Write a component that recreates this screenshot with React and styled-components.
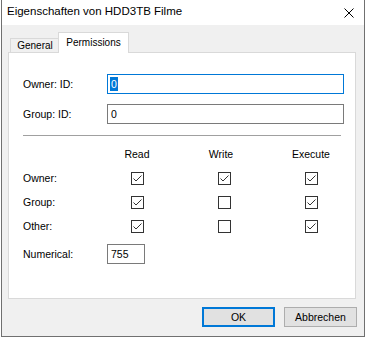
import { Fragment } from "react"
import styled, { createGlobalStyle } from "styled-components"

const GlobalStyle = createGlobalStyle`
  html, body {
    margin: 0;
    padding: 0;
    background: #ffffff;
  }
  body {
    font-family: "Liberation Sans", Arial, sans-serif;
    color: #000;
  }
`

const Window = styled.div`
  box-sizing: border-box;
  width: 364px;
  height: 337px;
  margin-left: 1px;
  border: 1px solid #707070;
  border-top: none;
  background: #f0f0f0;
  display: flex;
  flex-direction: column;
`

const TitleBar = styled.div`
  height: 25px;
  flex: none;
  background: #ffffff;
  display: flex;
  align-items: center;
  justify-content: space-between;
  padding: 0 10px 0 5px;
`

const Title = styled.span`
  font-size: 11.5px;
  line-height: 1;
  padding-bottom: 1px;
`

const CloseButton = styled.div`
  width: 10px;
  height: 10px;
  display: flex;
`

const Body = styled.div`
  display: flex;
  flex-direction: column;
  padding: 7px 7px 0 6px;
`

const TabStrip = styled.div`
  display: flex;
  align-items: flex-end;
  height: 21px;
  margin-bottom: -1px;
  padding-left: 2px;
  position: relative;
  z-index: 1;
`

const Tab = styled.div`
  box-sizing: border-box;
  height: ${(p) => (p.$active ? "21px" : "15px")};
  padding: ${(p) => (p.$active ? "0 7px 2px" : "0 6px")};
  margin-left: ${(p) => (p.$active ? "-2px" : "0")};
  border: 1px solid #d9d9d9;
  border-bottom: ${(p) => (p.$active ? "none" : "1px solid #d9d9d9")};
  background: ${(p) => (p.$active ? "#ffffff" : "#f0f0f0")};
  font-size: 10px;
  display: flex;
  align-items: center;
  justify-content: center;
  width: ${(p) => p.$width}px;
`

const Panel = styled.div`
  box-sizing: border-box;
  width: 348px;
  height: 247px;
  border: 1px solid #d9d9d9;
  background: #ffffff;
  padding: 21px 0 0 14px;
  display: flex;
  flex-direction: column;
  font-size: 10.5px;
`

const FieldRow = styled.div`
  display: flex;
  align-items: center;
  height: 20px;
  margin-top: ${(p) => p.$gap || 0}px;
`

const Label = styled.div`
  width: 84px;
  flex: none;
`

const TextBox = styled.div`
  box-sizing: border-box;
  width: ${(p) => p.$width}px;
  height: 20px;
  border: 1px solid ${(p) => (p.$focused ? "#0078d7" : "#7a7a7a")};
  background: #fff;
  padding-left: 3px;
  display: flex;
  align-items: center;
  font-size: 10.5px;
`

const Selected = styled.span`
  background: #0078d7;
  color: #ffffff;
  padding: 1px 1px;
  margin-left: -1px;
`

const Separator = styled.div`
  width: 318px;
  height: 1px;
  background: #a0a0a0;
  margin-top: 11px;
`

const PermGrid = styled.div`
  display: grid;
  grid-template-columns: 57px 60px 60px 60px;
  column-gap: 27px;
  grid-auto-rows: 24px;
  align-items: center;
  justify-items: center;
  margin-top: 6px;
`

const RowLabel = styled.div`
  justify-self: start;
`

const Header = styled.div`
  margin-left: ${(p) => p.$shift || 0}px;
`

const Box = styled.div`
  box-sizing: border-box;
  width: 13px;
  height: 13px;
  border: 1px solid #333333;
  background: #ffffff;
  display: flex;
  align-items: center;
  justify-content: center;
`

const Buttons = styled.div`
  display: flex;
  justify-content: flex-end;
  gap: 9px;
  margin-top: 8px;
`

const Button = styled.div`
  box-sizing: border-box;
  width: 73px;
  height: 20px;
  background: #e1e1e1;
  border: ${(p) => (p.$default ? "2px solid #0078d7" : "1px solid #adadad")};
  font-size: 10.5px;
  display: flex;
  align-items: center;
  justify-content: center;
`

const CheckBox = ({ checked }) => (
  <Box>
    {checked && (
      <svg width="11" height="11" viewBox="0 0 11 11">
        <path d="M1.5 5.5 L4 8 L9.5 2.5" fill="none" stroke="#333" strokeWidth="1" />
      </svg>
    )}
  </Box>
)

const rows = [
  { name: "Owner:", perms: [true, true, true] },
  { name: "Group:", perms: [true, false, true] },
  { name: "Other:", perms: [true, false, true] },
]

export default function App() {
  return (
    <>
      <GlobalStyle />
      <Window>
        <TitleBar>
          <Title>Eigenschaften von HDD3TB Filme</Title>
          <CloseButton>
            <svg width="10" height="10" viewBox="0 0 10 10">
              <path d="M0.5 0.5 L9.5 9.5 M9.5 0.5 L0.5 9.5" stroke="#000" strokeWidth="1" />
            </svg>
          </CloseButton>
        </TitleBar>
        <Body>
          <TabStrip>
            <Tab $width={50}>General</Tab>
            <Tab $active $width={71}>Permissions</Tab>
          </TabStrip>
          <Panel>
            <FieldRow>
              <Label>Owner: ID:</Label>
              <TextBox $width={237} $focused>
                <Selected>0</Selected>
              </TextBox>
            </FieldRow>
            <FieldRow $gap={10}>
              <Label>Group: ID:</Label>
              <TextBox $width={237}>0</TextBox>
            </FieldRow>
            <Separator />
            <PermGrid>
              <span />
              <Header>Read</Header>
              <Header $shift={-6}>Write</Header>
              <Header>Execute</Header>
              {rows.map((r) => (
                <Fragment key={r.name}>
                  <RowLabel>{r.name}</RowLabel>
                  {r.perms.map((c, i) => (
                    <CheckBox key={i} checked={c} />
                  ))}
                </Fragment>
              ))}
            </PermGrid>
            <FieldRow $gap={6}>
              <Label>Numerical:</Label>
              <TextBox $width={38}>755</TextBox>
            </FieldRow>
          </Panel>
          <Buttons>
            <Button $default>OK</Button>
            <Button>Abbrechen</Button>
          </Buttons>
        </Body>
      </Window>
    </>
  )
}
